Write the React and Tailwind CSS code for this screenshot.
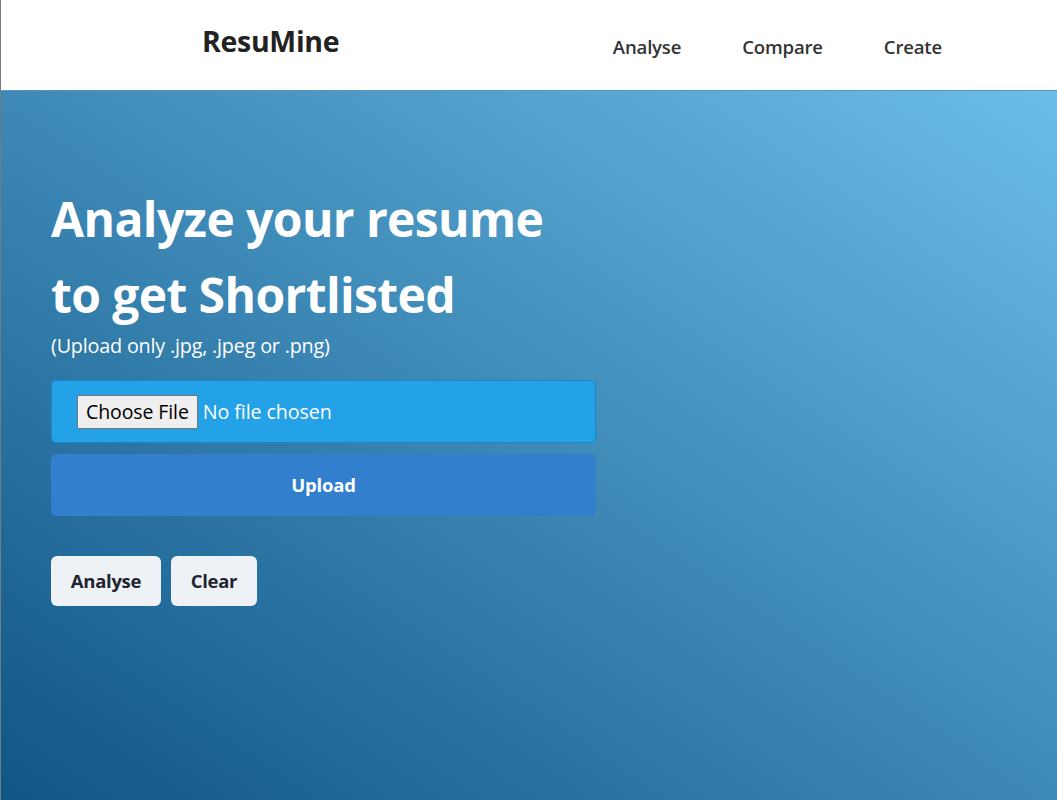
export default function App() {
  const font = { fontFamily: '"Open Sans", "Noto Sans", Arial, sans-serif' };
  return (
    <div style={font} className="min-h-[800px] w-full border-l border-[#7a7a7a] flex flex-col">
      <header className="h-[91px] bg-white flex items-center border-b border-[#5b97bd]">
        <div className="w-[201px]" />
        <div className="text-[28.5px] font-bold text-[#222] -mt-[8px] tracking-[-0.3px]">ResuMine</div>
        <nav className="ml-auto mr-[115px] mt-[4px] flex gap-[61px] text-[18.6px] text-[#333] font-semibold tracking-[-0.2px]">
          <a>Analyse</a>
          <a>Compare</a>
          <a>Create</a>
        </nav>
      </header>
      <main className="flex-1 bg-[linear-gradient(to_top_right,#0f5585,#6cbde8)] pl-[50px] pt-[90px]">
        <h1 className="text-white font-bold text-[48px] leading-[76px] tracking-[-0.6px]">
          Analyze your resume
          <br />
          to get Shortlisted
        </h1>
        <p className="text-white text-[19.8px] leading-[24px] mt-[1px] tracking-[-0.2px]">(Upload only .jpg, .jpeg or .png)</p>
        <div className="mt-[22px] w-[545px] flex flex-col gap-[11px]">
          <div className="h-[63px] bg-[#23a2e7] border border-[#1b86c9] rounded-[5px] flex items-center pl-[25px]">
            <span className="h-[34px] px-[8px] flex items-center bg-[#efefef] border border-[#767676] rounded-[2px] text-[19.5px] text-black tracking-[-0.1px]">Choose File</span>
            <span className="ml-[5px] text-white text-[19.7px] tracking-[-0.1px]">No file chosen</span>
          </div>
          <button className="h-[62px] bg-[#317fcd] rounded-[6px] text-white font-bold text-[18.5px] tracking-[-0.2px]">Upload</button>
        </div>
        <div className="mt-[40px] flex gap-[10px]">
          <button className="h-[50px] w-[110px] bg-[#eef2f6] rounded-[6px] text-[#1f2430] font-bold text-[18.5px] tracking-[-0.3px]">Analyse</button>
          <button className="h-[50px] w-[86px] bg-[#eef2f6] rounded-[6px] text-[#1f2430] font-bold text-[18.5px] tracking-[-0.3px]">Clear</button>
        </div>
      </main>
    </div>
  );
}
